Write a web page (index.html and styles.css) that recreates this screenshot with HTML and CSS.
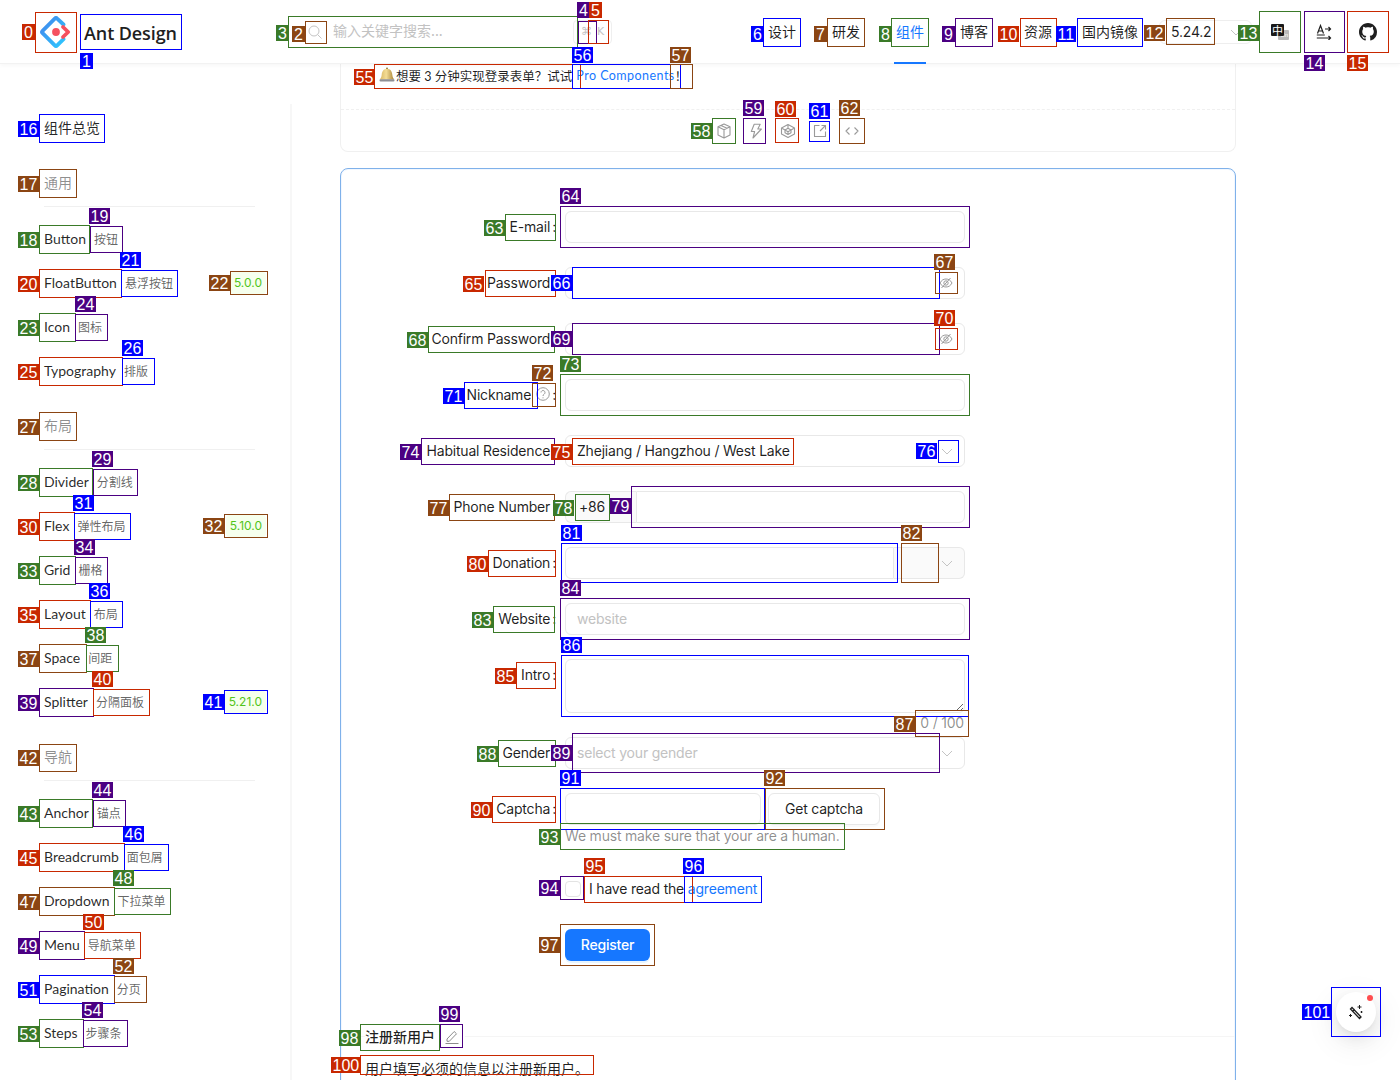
FILE: index.html
```html
<!DOCTYPE html>
<html lang="zh">
<head>
<meta charset="utf-8">
<title>Form 表单 - Ant Design</title>
<link rel="stylesheet" href="styles.css">
</head>
<body>
<div class="page">
  <header class="header">
    <a class="brand">
      <svg class="logo" viewBox="0 0 32 32" width="32" height="32">
        <defs><linearGradient id="lg" x1="0" y1="0" x2="1" y2="1"><stop offset="0" stop-color="#4285eb"/><stop offset="1" stop-color="#2ec7ff"/></linearGradient></defs>
        <path d="M23.5 8.5 17.2 2.6a1.7 1.7 0 0 0-2.4 0L2.6 14.8a1.7 1.7 0 0 0 0 2.4l12.2 12.2a1.7 1.7 0 0 0 2.4 0l6.3-6.2" fill="none" stroke="url(#lg)" stroke-width="3.8" stroke-linecap="round"/>
        <path d="m23 11 5.2 5-5.2 5" fill="none" stroke="#f5515f" stroke-width="3.8" stroke-linecap="round" stroke-linejoin="round"/>
        <circle cx="16" cy="16" r="3.9" fill="#f5515f"/>
      </svg>
      <span class="brand-name">Ant Design</span>
    </a>
    <div class="search">
      <svg class="ico-search" viewBox="0 0 16 16" width="16" height="16"><circle cx="7" cy="7" r="5" fill="none" stroke="#c4c4c4"/><path d="m10.7 10.7 3.8 3.8" stroke="#c4c4c4" fill="none"/></svg>
      <span class="search-text">输入关键字搜索...</span>
      <kbd class="kbd"><span>⌘</span><span>K</span></kbd>
    </div>
    <nav class="nav">
      <a class="nav-item">设计</a>
      <a class="nav-item">研发</a>
      <a class="nav-item active">组件</a>
      <a class="nav-item">博客</a>
      <a class="nav-item">资源</a>
    </nav>
    <a class="mirror">国内镜像</a>
    <div class="version"><span>5.24.2</span><svg class="chev" viewBox="0 0 12 12" width="12" height="12"><path d="m1 4 5 5 5-5"/></svg></div>
    <div class="tools">
      <button class="tool"><span class="lang"><span class="lang-a">中</span><span class="lang-b">En</span></span></button>
      <button class="tool">
        <svg viewBox="0 0 16 16" width="16" height="16" fill="none" stroke="#1f1f1f" stroke-width="1.2"><path d="m1.5 9.5 3-8 3 8M2.600 7h3.800M.8 11h8M9 5h5.500m-2-2 2 2-2 2M.8 14h13.700m-2-2 2 2-2 2"/></svg>
      </button>
      <button class="tool">
        <svg viewBox="0 0 16 16" width="18" height="18" fill="#1f1f1f"><path d="M8 0C3.58 0 0 3.58 0 8c0 3.54 2.29 6.53 5.47 7.59.4.07.55-.17.55-.38 0-.19-.01-.82-.01-1.49-2.01.37-2.53-.49-2.69-.94-.09-.23-.48-.94-.82-1.13-.28-.15-.68-.52-.01-.53.63-.01 1.08.58 1.23.82.72 1.21 1.87.87 2.33.66.07-.52.28-.87.51-1.07-1.78-.2-3.64-.89-3.64-3.95 0-.87.31-1.59.82-2.15-.08-.2-.36-1.02.08-2.12 0 0 .67-.21 2.2.82.64-.18 1.32-.27 2-.27.68 0 1.36.09 2 .27 1.53-1.04 2.2-.82 2.2-.82.44 1.1.16 1.92.08 2.12.51.56.82 1.27.82 2.15 0 3.07-1.87 3.75-3.65 3.95.29.25.54.73.54 1.48 0 1.07-.01 1.93-.01 2.2 0 .21.15.46.55.38A8.013 8.013 0 0016 8c0-4.42-3.58-8-8-8z"/></svg>
      </button>
    </div>
  </header>

  <div class="body">
    <aside class="side">
      <a class="item"><span class="item-name cjk">组件总览</span></a>

      <div class="group">通用</div>
      <a class="item"><span class="item-name">Button</span><span class="item-sub">按钮</span></a>
      <a class="item"><span class="item-name">FloatButton</span><span class="item-sub">悬浮按钮</span><span class="tag">5.0.0</span></a>
      <a class="item"><span class="item-name">Icon</span><span class="item-sub">图标</span></a>
      <a class="item"><span class="item-name">Typography</span><span class="item-sub">排版</span></a>

      <div class="group">布局</div>
      <a class="item"><span class="item-name">Divider</span><span class="item-sub">分割线</span></a>
      <a class="item"><span class="item-name">Flex</span><span class="item-sub">弹性布局</span><span class="tag">5.10.0</span></a>
      <a class="item"><span class="item-name">Grid</span><span class="item-sub">栅格</span></a>
      <a class="item"><span class="item-name">Layout</span><span class="item-sub">布局</span></a>
      <a class="item"><span class="item-name">Space</span><span class="item-sub">间距</span></a>
      <a class="item"><span class="item-name">Splitter</span><span class="item-sub">分隔面板</span><span class="tag">5.21.0</span></a>

      <div class="group">导航</div>
      <a class="item"><span class="item-name">Anchor</span><span class="item-sub">锚点</span></a>
      <a class="item"><span class="item-name">Breadcrumb</span><span class="item-sub">面包屑</span></a>
      <a class="item"><span class="item-name">Dropdown</span><span class="item-sub">下拉菜单</span></a>
      <a class="item"><span class="item-name">Menu</span><span class="item-sub">导航菜单</span></a>
      <a class="item"><span class="item-name">Pagination</span><span class="item-sub">分页</span></a>
      <a class="item"><span class="item-name">Steps</span><span class="item-sub">步骤条</span></a>
    </aside>

    <main class="main">
      <section class="card-top">
        <p class="notice">
          <svg class="bell" viewBox="0 0 16 16" width="16" height="16"><defs><linearGradient id="bg" x1="0" y1="0" x2="1" y2="0"><stop offset="0" stop-color="#d9b765"/><stop offset=".45" stop-color="#f3dc95"/><stop offset="1" stop-color="#a98438"/></linearGradient></defs><rect x="7" y=".5" width="2" height="2" rx="1" fill="#8f7431"/><path d="M8 1.800c-3.600 0-5 2.800-5.300 6-.2 2.200-.9 3.600-1.900 4.700h14.400c-1-1.100-1.700-2.500-1.900-4.700-.3-3.200-1.700-6-5.300-6z" fill="url(#bg)"/><rect x=".5" y="12.300" width="15" height="2.200" rx="1.100" fill="#8e8f94"/></svg><span class="notice-text">想要 3 分钟实现登录表单？试试 </span><a class="notice-link">Pro Components</a><span class="notice-end">！</span>
        </p>
        <div class="actions">
          <svg viewBox="0 0 16 16" width="16" height="16" class="act"><path d="M8 1 14 3.800V12L8 15 2 12V3.800zM2 3.800 8 6.700l6-2.900M8 6.700V15M5 2.400l6 2.900"/></svg>
          <svg viewBox="0 0 16 16" width="16" height="16" class="act"><path d="M6.200 1.300h6L9.800 6h3.600L5 15l1.600-6.500H3.300z"/></svg>
          <svg viewBox="0 0 16 16" width="16" height="16" class="act"><path d="M8 1.500 14.500 5v6L8 14.500 1.500 11V5zM8 5.300 11 7 8 8.700 5 7zM5 7v2.700l3 1.700 3-1.700V7M8 8.700v2.700M1.500 5 5 7M14.500 5 11 7M8 1.500v3.800"/></svg>
          <svg viewBox="0 0 16 16" width="16" height="16" class="act"><path d="M7.500 2.500H2.500v11h11v-5M9.500 2.500h4v4M13.500 2.500 8 8"/></svg>
          <svg viewBox="0 0 16 16" width="16" height="16" class="act"><path d="M5.500 4.500 2 8l3.500 3.500M10.500 4.500 14 8l-3.500 3.500"/></svg>
        </div>
      </section>

      <section class="card-form">
        <form class="form">
          <div class="row"><label class="label">E-mail<i class="colon">:</i></label><div class="ctl"><input class="input"></div></div>
          <div class="row"><label class="label">Password<i class="colon">:</i></label><div class="ctl"><div class="affix"><input class="bare" type="password"><svg class="eye" viewBox="0 0 14 14" width="14" height="14"><path d="M1 7c1.500-2.800 3.500-4 6-4s4.500 1.200 6 4c-1.500 2.800-3.500 4-6 4s-4.500-1.200-6-4zM2.500 12 11.500 2"/><circle cx="7" cy="7" r="2.200"/></svg></div></div></div>
          <div class="row"><label class="label">Confirm Password<i class="colon">:</i></label><div class="ctl"><div class="affix"><input class="bare" type="password"><svg class="eye" viewBox="0 0 14 14" width="14" height="14"><path d="M1 7c1.500-2.800 3.500-4 6-4s4.500 1.200 6 4c-1.500 2.800-3.500 4-6 4s-4.500-1.200-6-4zM2.500 12 11.500 2"/><circle cx="7" cy="7" r="2.200"/></svg></div></div></div>
          <div class="row"><label class="label">Nickname<svg class="help" viewBox="0 0 14 14" width="14" height="14"><circle cx="7" cy="7" r="6.300"/><path d="M5 5.500a2 2 0 1 1 3.200 1.600C7.400 7.700 7 8 7 9M7 10.300v1"/></svg><i class="colon">:</i></label><div class="ctl"><input class="input"></div></div>
          <div class="row"><label class="label">Habitual Residence<i class="colon">:</i></label><div class="ctl"><div class="select"><span class="val">Zhejiang / Hangzhou / West Lake</span><svg class="chev" viewBox="0 0 12 12" width="12" height="12"><path d="m1 4 5 5 5-5"/></svg></div></div></div>
          <div class="row"><label class="label">Phone Number<i class="colon">:</i></label><div class="ctl group-ctl"><div class="addon addon-left"><span>+86</span><svg class="chev" viewBox="0 0 12 12" width="12" height="12"><path d="m1 4 5 5 5-5"/></svg></div><input class="input join-left"></div></div>
          <div class="row"><label class="label">Donation<i class="colon">:</i></label><div class="ctl group-ctl"><input class="input join-right"><div class="addon addon-right"><svg class="chev" viewBox="0 0 12 12" width="12" height="12"><path d="m1 4 5 5 5-5"/></svg></div></div></div>
          <div class="row"><label class="label">Website<i class="colon">:</i></label><div class="ctl"><input class="input" placeholder="website"></div></div>
          <div class="row"><label class="label">Intro<i class="colon">:</i></label><div class="ctl ctl-area"><textarea class="area"></textarea><span class="count">0 / 100</span></div></div>
          <div class="row"><label class="label">Gender<i class="colon">:</i></label><div class="ctl"><div class="select"><span class="ph">select your gender</span><svg class="chev" viewBox="0 0 12 12" width="12" height="12"><path d="m1 4 5 5 5-5"/></svg></div></div></div>
          <div class="row row-cap"><label class="label">Captcha<i class="colon">:</i></label><div class="ctl"><div class="cap"><input class="input cap-input"><button type="button" class="btn">Get captcha</button></div><p class="extra">We must make sure that your are a human.</p></div></div>
          <div class="row"><span></span><div class="ctl check"><span class="box"></span><span class="check-text">I have read the <a class="link">agreement</a></span></div></div>
          <div class="row row-last"><span></span><div class="ctl"><button type="button" class="btn-primary">Register</button></div></div>
        </form>
        <div class="meta">
          <div class="meta-title"><span class="meta-name">注册新用户</span><svg class="edit" viewBox="0 0 16 16" width="16" height="16"><path d="M3 12.300V10l7.200-7.500 2.300 2.300L5.300 12.300zM1.500 14.500h13"/></svg></div>
          <p class="meta-desc">用户填写必须的信息以注册新用户。</p>
        </div>
      </section>
    </main>
  </div>

  <button class="fab">
    <svg viewBox="0 0 16 16" width="16" height="16" fill="none" stroke="#1f1f1f"><path d="m4 3.500 9 9.500-1.500 1.500-9-9.500zM5 7l1.700-1.700" stroke-width="1.300"/><path d="M11.500 1v4M9.500 3h4M13.500 7v2M12.500 8h2M2.500 10v3M1 11.500h3" stroke-width="1"/></svg>
    <span class="fab-dot"></span>
  </button>
</div>
<div class="overlay" id="overlay"></div>
<script src="overlay.js"></script>
</body>
</html>
```
FILE: styles.css
```css
* { box-sizing: border-box; }
html, body { margin: 0; padding: 0; height: 1080px; overflow: hidden; background: #fff; }
body { font-family: Inter, "Noto Sans CJK SC", sans-serif; font-size: 14px; color: rgba(0,0,0,.88); }
.page { position: relative; height: 1080px; overflow: hidden; }
p { margin: 0; }
a { cursor: pointer; }

/* header */
.header { position: relative; z-index: 2; display: flex; align-items: center; height: 64px; padding-right: 12px; background: #fff; box-shadow: 0 2px 4px rgba(0,0,0,.03); border-bottom: 1px solid #f2f2f2; }
.brand { display: flex; align-items: center; gap: 12px; width: 292px; padding-left: 40px; flex: none; }
.logo { flex: none; }
.brand-name { padding-top: 2px; font-family: "Open Sans", sans-serif; font-size: 18px; font-weight: 600; color: #1f1f1f; letter-spacing: -.1px; }
.search { display: flex; align-items: center; width: 320px; flex: none; padding-left: 15px; }
.ico-search { flex: none; }
.search-text { flex: 1; margin-left: 10px; padding-bottom: 3px; color: #c2c2c2; font-family: "Noto Sans CJK SC", sans-serif; }
.kbd { display: flex; justify-content: center; gap: 5px; align-items: center; width: 39px; height: 24px; border: 1px solid #efefef; border-radius: 4px; color: #c4c4c4; font: 11px "DejaVu Sans", sans-serif; }
.nav { display: flex; margin-left: auto; align-self: stretch; }
.nav-item { position: relative; display: flex; align-items: center; padding: 0 18px 2px; font-family: "Noto Sans CJK SC", sans-serif; color: rgba(0,0,0,.88); }
.nav-item.active { color: #1677ff; }
.nav-item.active::after { content: ""; position: absolute; left: 16px; right: 16px; bottom: -1px; height: 2px; background: #1677ff; }
.mirror { margin-left: 12px; padding-bottom: 2px; font-family: "Noto Sans CJK SC", sans-serif; }
.version { display: flex; align-items: center; justify-content: space-between; width: 93px; height: 24px; margin-left: 21px; padding: 0 9px 0 11px; border: 1px solid #eee; border-radius: 6px; letter-spacing: -.2px; }
.tools { display: flex; gap: 4px; margin-left: 8px; }
.tool { display: flex; align-items: center; justify-content: center; width: 40px; height: 40px; padding: 0; border: 0; background: none; }
.lang { position: relative; display: block; width: 18px; height: 16px; }
.lang-a { position: absolute; left: 0; top: 0; width: 13px; height: 12px; background: #1a1a1a; color: #fff; border-radius: 1px; font: 11px/12px "Noto Sans CJK SC", sans-serif; text-align: center; z-index: 1; }
.lang-b { position: absolute; right: 0; bottom: 0; width: 11px; height: 10px; background: #bbb; color: #fff; border-radius: 1px; font: 6px/10px "Liberation Sans", sans-serif; text-align: right; padding-right: 1px; }

/* chevrons and small svg */
.chev { flex: none; }
.chev path { fill: none; stroke: #c4c4c4; stroke-width: 1; }

/* layout */
.body { display: flex; align-items: flex-start; }
.side { flex: none; width: 292px; height: 1040px; margin-top: 40px; padding-top: 4px; border-right: 2px solid #f7f7f7; }
.main { flex: none; width: 896px; margin-left: 48px; }

/* sidebar */
.item { display: flex; align-items: center; height: 40px; margin-bottom: 4px; padding: 0 24px 0 44px; }
.item-name { padding-bottom: 2px; font-family: Lato, "Noto Sans CJK SC", sans-serif; font-size: 14px; color: rgba(0,0,0,.85); }
.item-name.cjk { font-family: "Noto Sans CJK SC", sans-serif; font-size: 14px; }
.item-sub { margin-left: 8px; padding-bottom: 2px; font-family: "Noto Sans CJK SC", sans-serif; font-size: 12px; color: rgba(0,0,0,.62); }
.tag { margin-left: auto; padding: 1px 4px; font-size: 12px; line-height: 20px; color: #52c41a; background: #f6ffed; border-radius: 4px; }
.group { height: 35px; margin: 24px 35px 12px 44px; padding-bottom: 12px; border-bottom: 1px solid #f0f0f0; font-family: "Noto Sans CJK SC", sans-serif; line-height: 20px; color: rgba(0,0,0,.45); }

/* top card */
.card-top { height: 88px; border: 1px solid #f0f0f0; border-top: 0; border-radius: 0 0 8px 8px; }
.notice { display: flex; align-items: center; height: 24px; padding-left: 38px; padding-bottom: 2px; font-family: Lato, "Noto Sans CJK SC", sans-serif; font-size: 12.500px; white-space: pre; }
.bell { flex: none; margin-right: 1px; }
.notice-link { margin-left: 1px; color: #1677ff; letter-spacing: .45px; }
.actions { display: flex; justify-content: center; align-items: center; gap: 16px; height: 43px; margin-top: 21px; border-top: 1px dashed #f0f0f0; }
.act { fill: none; stroke: #9a9a9a; stroke-width: 1.100; stroke-linejoin: round; }

/* form card */
.card-form { margin-top: 16px; height: 1000px; padding-top: 42px; border: 1px solid #7fb1ea; border-radius: 8px; box-shadow: inset 0 0 0 1px rgba(22,119,255,.06); }
.form { letter-spacing: -.2px; }
.row { display: grid; grid-template-columns: 224px 400px; margin-bottom: 24px; }
.row-last { margin-bottom: 75px; }
.label { display: flex; align-items: center; justify-content: flex-end; height: 32px; padding: 0 9px 2px 0; white-space: nowrap; }
.colon { margin-left: 2px; font-style: normal; }
.help { margin-left: 5px; fill: none; stroke: #9a9a9a; stroke-width: 1; }
.ctl { position: relative; display: block; min-height: 32px; }
.input { display: block; width: 100%; height: 32px; padding: 0 11px 2px; border: 1px solid #e8e8e8; border-radius: 6px; background: #fff; font: inherit; letter-spacing: inherit; outline: 0; }
.input::placeholder { color: #c2c2c2; }
.affix { display: flex; align-items: center; height: 32px; padding: 0 11px; border: 1px solid #e8e8e8; border-radius: 6px; }
.bare { flex: 1; min-width: 0; height: 24px; padding: 0; border: 0; outline: 0; font: inherit; }
.eye { flex: none; fill: none; stroke: #9a9a9a; stroke-width: 1; }
.select { display: flex; align-items: center; justify-content: space-between; height: 32px; padding: 0 11px 2px; border: 1px solid #e8e8e8; border-radius: 6px; }
.select .chev { margin-top: 2px; }
.ph { color: #c2c2c2; }
.group-ctl { display: flex; }
.addon { display: flex; flex: none; align-items: center; height: 32px; background: #fafafa; border: 1px solid #e8e8e8; }
.addon-left { width: 71px; justify-content: space-between; padding: 0 5px 2px 13px; border-right: 0; border-radius: 6px 0 0 6px; }
.addon-right { width: 71px; justify-content: flex-end; padding-right: 11px; border-left: 0; border-radius: 0 6px 6px 0; }
.join-left { flex: 1; border-radius: 0 6px 6px 0; }
.join-right { flex: 1; border-radius: 6px 0 0 6px; }
.ctl-area { height: 54px; min-height: 54px; }
.area { display: block; width: 100%; height: 54px; padding: 4px 11px; border: 1px solid #e8e8e8; border-radius: 6px; font: inherit; outline: 0; }
.count { position: absolute; top: 53px; right: 1px; line-height: 22px; color: rgba(0,0,0,.45); }
.cap { display: flex; gap: 7px; }
.cap-input { flex: none; width: 196px; }
.btn { flex: none; width: 112px; height: 32px; padding: 0 0 2px; border: 1px solid #e8e8e8; border-radius: 6px; background: #fff; font: inherit; letter-spacing: inherit; color: rgba(0,0,0,.88); box-shadow: 0 2px 0 rgba(0,0,0,.02); }
.extra { height: 24px; line-height: 22px; color: rgba(0,0,0,.45); }
.check { display: flex; align-items: center; height: 32px; }
.box { flex: none; width: 16px; height: 16px; border: 1px solid #e3e3e3; border-radius: 4px; }
.check-text { margin-left: 8px; padding-bottom: 2px; white-space: pre; }
.link { color: #1677ff; }
.btn-primary { display: block; width: 85px; height: 32px; padding: 0 0 2px; border: 0; border-radius: 6px; background: #1677ff; color: #fff; font: inherit; letter-spacing: inherit; font-weight: 500; box-shadow: 0 2px 0 rgba(5,145,255,.1); }

/* demo meta */
.meta { border-top: 1px solid #f5f5f5; padding-left: 24px; }
.meta-title { display: inline-flex; align-items: center; height: 22px; margin-top: -11px; padding-bottom: 2px; background: #fff; font-family: "Noto Sans CJK SC", sans-serif; font-weight: 500; vertical-align: top; }
.edit { margin: 2px 5px 0 9px; fill: none; stroke: #8c8c8c; stroke-width: 1; }
.meta-desc { margin-top: 3px; line-height: 22px; font-family: "Noto Sans CJK SC", sans-serif; }

/* floating button */
.fab { position: absolute; left: 1336px; top: 992px; display: flex; align-items: center; justify-content: center; width: 40px; height: 40px; padding: 0; border: 0; border-radius: 50%; background: #fff; box-shadow: 0 6px 16px rgba(0,0,0,.08), 0 3px 6px -4px rgba(0,0,0,.12), 0 9px 28px 8px rgba(0,0,0,.05); z-index: 3; }
.fab-dot { position: absolute; right: 3px; top: 3px; width: 6px; height: 6px; border-radius: 50%; background: #ff4d4f; }

/* numbered annotation layer */
.overlay { position: absolute; left: 0; top: 0; width: 1400px; height: 1080px; z-index: 10; pointer-events: none; }
.ann-box { position: absolute; border: 1px solid; }
.ann-tag { position: absolute; min-width: 13px; height: 16px; padding: 0 1.500px; font: 16px/17px "Liberation Sans", Arial, sans-serif; color: #fff; text-align: center; white-space: nowrap; }
.c0 { border-color: #c82800; } .ann-tag.c0 { background: #c82800; }
.c1 { border-color: #0000ff; } .ann-tag.c1 { background: #0000ff; }
.c2 { border-color: #8b4513; } .ann-tag.c2 { background: #8b4513; }
.c3 { border-color: #3a7a28; } .ann-tag.c3 { background: #3a7a28; }
.c4 { border-color: #4b0082; } .ann-tag.c4 { background: #4b0082; }
```
FILE: overlay.js
```js
// [left, top, right, bottom, tagLeft, tagTop]; the index is the annotation number
var ANN = [
[35,12,77,53,22,24],[80,14,182,50,80,53],[305,21,327,44,292,26],[288,16,578,48,276,25],[578,21,597,44,577,2],
[588,20,609,44,589,2],[763,18,801,47,751,26],[827,18,865,47,814,26],[891,18,929,47,879,26],[955,18,993,47,942,26],
[1020,18,1057,47,998,26],[1077,18,1143,47,1056,26],[1166,18,1215,45,1144,25],[1259,11,1301,53,1238,25],[1304,11,1345,53,1304,55],
[1347,11,1389,53,1347,55],[39,114,105,143,18,121],[39,169,77,198,18,176],[39,225,90,254,18,232],[90,226,123,253,89,208],
[39,269,122,298,18,276],[121,270,178,297,120,252],[230,271,268,295,209,275],[39,313,76,342,18,320],[75,314,108,341,75,296],
[39,357,123,386,18,364],[122,358,155,385,122,340],[39,412,77,441,18,419],[39,468,93,497,18,475],[93,469,138,496,92,451],
[39,512,75,541,18,519],[74,513,131,540,73,495],[224,514,268,538,203,518],[39,556,76,585,18,563],[75,557,108,584,74,539],
[39,600,91,629,18,607],[90,601,123,628,89,583],[39,644,87,673,18,651],[86,645,119,672,85,627],[39,688,94,717,18,695],
[93,689,150,716,92,671],[224,690,268,714,203,694],[39,744,77,772,18,750],[39,799,93,828,18,806],[93,800,126,827,92,782],
[39,843,125,872,18,850],[124,844,169,871,123,826],[39,887,115,916,18,894],[114,888,171,915,113,870],[39,931,85,960,18,938],
[84,932,141,959,83,914],[39,975,115,1004,18,982],[114,976,147,1003,113,958],[39,1019,84,1048,18,1026],[83,1020,128,1047,82,1002],
[374,64,581,89,354,69],[572,64,681,89,572,47],[670,64,693,89,670,47],[712,118,736,144,691,123],[743,118,766,144,743,100],
[775,118,799,143,775,101],[809,121,830,142,809,103],[839,118,865,144,839,100],[505,214,556,241,484,220],[560,206,970,248,560,188],
[485,270,556,297,463,276],[572,267,940,299,551,275],[935,272,958,294,934,254],[428,326,555,353,407,332],[572,323,940,355,551,331],
[935,328,958,350,934,310],[464,382,538,409,443,388],[532,383,556,407,532,365],[560,374,970,416,560,356],[421,438,555,465,400,444],
[572,438,794,465,551,444],[938,440,959,463,916,443],[449,494,555,521,428,500],[575,494,610,521,553,500],[631,486,970,528,610,498],
[488,550,556,577,467,556],[561,543,898,583,561,525],[901,543,939,583,901,525],[493,606,555,633,472,612],[560,598,970,640,560,580],
[516,662,556,689,495,668],[561,655,969,717,561,637],[915,710,969,737,894,716],[498,740,556,767,477,746],[572,733,940,773,551,745],
[492,796,556,823,471,802],[560,788,765,830,560,770],[765,788,885,830,764,770],[560,823,845,850,539,829],[560,876,584,900,539,880],
[584,876,693,903,584,858],[684,876,762,903,683,858],[560,924,655,966,539,937],[360,1024,440,1051,339,1030],[440,1024,463,1048,439,1006],
[360,1055,594,1075,331,1057],[1331,987,1381,1037,1302,1004]
];
(function () {
  var root = document.getElementById('overlay');
  ANN.forEach(function (a, n) {
    var cls = 'c' + (n % 5);
    var box = document.createElement('div');
    box.className = 'ann-box ' + cls;
    box.style.left = a[0] + 'px';
    box.style.top = a[1] + 'px';
    box.style.width = (a[2] - a[0]) + 'px';
    box.style.height = (a[3] - a[1]) + 'px';
    var tag = document.createElement('div');
    tag.className = 'ann-tag ' + cls;
    tag.style.left = a[4] + 'px';
    tag.style.top = a[5] + 'px';
    tag.textContent = n;
    root.appendChild(box);
    root.appendChild(tag);
  });
})();
```
